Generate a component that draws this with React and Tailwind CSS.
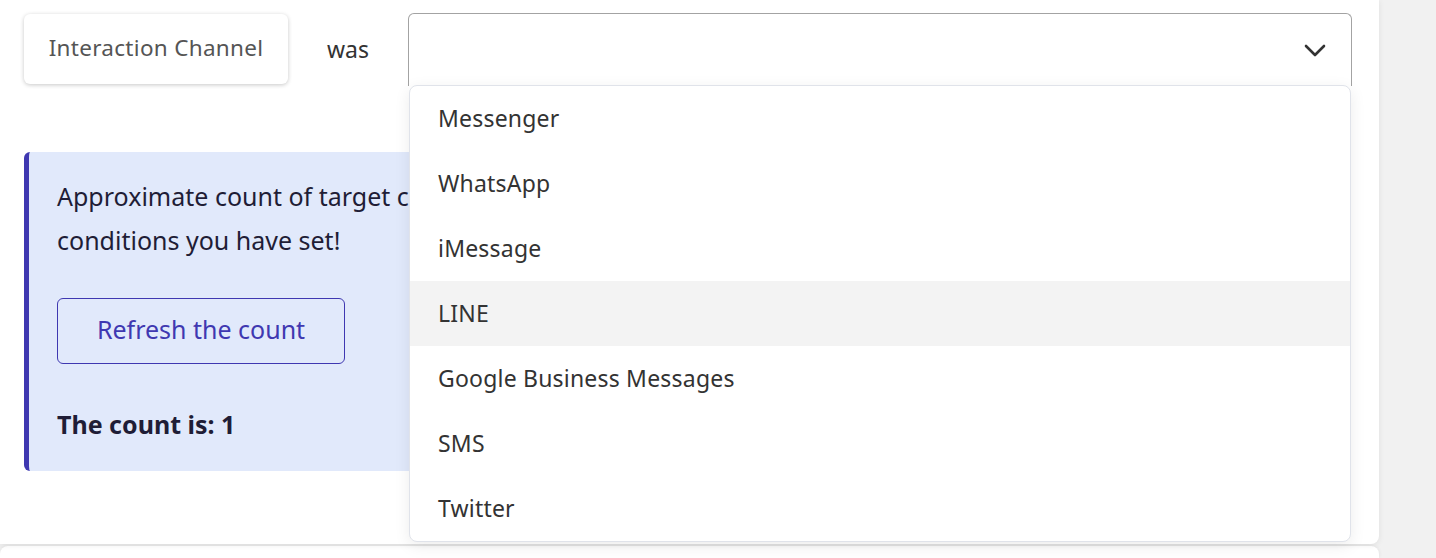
const OPTIONS = ["Messenger", "WhatsApp", "iMessage", "LINE", "Google Business Messages", "SMS", "Twitter"];

export default function App() {
  return (
    <div className="flex h-[558px] w-[1436px] overflow-hidden bg-[#f1f1f1] font-['Noto_Sans',sans-serif]">
      <div className="flex w-[1379px] shrink-0 flex-col">
        <div className="relative h-[544px] shrink-0 rounded-br-lg bg-white shadow-[0_1px_6px_rgba(0,0,0,0.08)]">
          <div className="flex items-start px-6 pt-[13px]">
            <div className="mt-px flex h-[70px] w-[264px] items-center justify-center rounded-md bg-white pb-[3px] text-[22.5px] tracking-[0.3px] text-[#555] shadow-[0_1px_4px_rgba(0,0,0,0.22)]">
              Interaction Channel
            </div>
            <div className="flex h-[71px] w-[120px] items-center justify-center pt-[2px] text-[23px] text-[#333]">was</div>
            <div className="relative w-[944px]">
              <div className="flex h-[73px] items-center justify-end rounded-t-md border border-b-0 border-[#a3a3a3] bg-white pr-[25px] text-[#333]">
                <svg width="22" height="13" viewBox="0 0 22 13" fill="none">
                  <path d="M2 2 L11 11 L20 2" stroke="currentColor" strokeWidth="2.6" strokeLinecap="round" strokeLinejoin="round" />
                </svg>
              </div>
              <ul className="absolute left-px top-[72px] z-10 w-[942px] rounded-lg border border-[#e0e3ea] bg-white shadow-[0_4px_16px_rgba(0,0,0,0.08)]">
                {OPTIONS.map((o) => (
                  <li
                    key={o}
                    className={`flex h-[65px] items-center pl-[28px] text-[23px] tracking-[0.2px] text-[#333] ${o === "LINE" ? "bg-[#f3f3f3]" : ""}`}
                  >
                    {o}
                  </li>
                ))}
              </ul>
            </div>
          </div>

          <div className="ml-6 mr-[40px] mt-[66px] rounded-md border-l-[5px] border-[#3f38b1] bg-[#e1e9fb] pb-[25px] pl-7 pr-8 pt-[22px] text-[#1f1d36]">
            <p className="text-[25px] leading-[44px]">
              Approximate count of target customers matching the
              <br />
              conditions you have set!
            </p>
            <button className="mt-[36px] flex h-[66px] w-[288px] items-center justify-center rounded-md border border-[#3f38b1] pb-[2px] text-[25px] text-[#3f38b1]">
              Refresh the count
            </button>
            <p className="mt-[38px] text-[25px] font-bold leading-[44px]">The count is: 1</p>
          </div>
        </div>
        <div className="mt-[2px] flex-1 rounded-t-lg bg-white shadow-[0_0_4px_rgba(0,0,0,0.08)]" />
      </div>
    </div>
  );
}
